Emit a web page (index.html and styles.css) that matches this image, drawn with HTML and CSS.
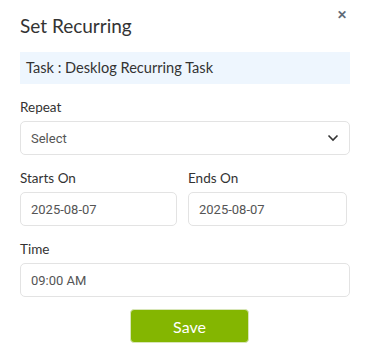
FILE: index.html
```html
<html lang="en">

<head>
    <meta charset="UTF-8">
    <meta name="viewport" content="width=device-width, initial-scale=1.0">
    <title>Set Recurring</title>
    <link rel="stylesheet" href="styles.css">
</head>

<body>
    <div class="modal">
        <div class="modal-header">
            <h2 class="modal-title">Set Recurring</h2>
            <button class="close-btn">&#10005;</button>
        </div>
        <div class="task-name">Task : Desklog Recurring Task</div>

        <div class="field">
            <label>Repeat</label>
            <div class="select-box">
                <span>Select</span>
                <svg width="12" height="8" viewBox="0 0 12 8">
                    <path d="M1.5 1.5 L6 6 L10.5 1.5" fill="none" stroke="#333" stroke-width="1.6" />
                </svg>
            </div>
        </div>

        <div class="date-row">
            <div class="field">
                <label>Starts On</label>
                <div class="input-box">2025-08-07</div>
            </div>
            <div class="field">
                <label>Ends On</label>
                <div class="input-box">2025-08-07</div>
            </div>
        </div>

        <div class="field">
            <label>Time</label>
            <div class="input-box">09:00 AM</div>
        </div>

        <div class="modal-footer">
            <button class="save-btn">Save</button>
        </div>
    </div>
</body>

</html>
```

FILE: styles.css
```css
body {
    margin: 0;
    background: #fff;
    font-family: Lato, "Liberation Sans", sans-serif;
    color: #333;
}

.modal {
    width: 330px;
    padding: 14px 20px;
    display: flex;
    flex-direction: column;
}

.modal-header {
    display: flex;
    justify-content: space-between;
    align-items: flex-start;
    padding-right: 3px;
}

.modal-title {
    margin: 0;
    font-size: 19px;
    font-weight: 400;
    line-height: 24px;
    color: #333;
}

.close-btn {
    margin-top: -6px;
    padding: 0;
    border: none;
    background: none;
    font-size: 12px;
    font-weight: 700;
    color: #5f6b77;
    line-height: 14px;
}

.task-name {
    margin-top: 14px;
    height: 32px;
    line-height: 32px;
    padding-left: 6px;
    background: #eef6fe;
    font-size: 14.6px;
    color: #333;
}

.field {
    display: flex;
    flex-direction: column;
    margin-top: 13px;
}

.field label {
    font-size: 13.5px;
    line-height: 20px;
    margin-bottom: 4px;
    color: #333;
}

.select-box,
.input-box {
    height: 34px;
    box-sizing: border-box;
    border: 1px solid #e3e3e3;
    border-radius: 5px;
    padding: 0 10px;
    display: flex;
    align-items: center;
    font-family: Roboto, sans-serif;
    font-size: 13px;
    color: #555;
}

.select-box {
    justify-content: space-between;
}

.date-row {
    display: grid;
    grid-template-columns: 157px 159px;
    column-gap: 11px;
}

.modal-footer {
    display: flex;
    justify-content: center;
    margin-top: 12px;
    padding-left: 9px;
}

.save-btn {
    width: 119px;
    height: 34px;
    border: 1px solid #d8e6b8;
    border-radius: 4px;
    background: #84b601;
    color: #fff;
    font-family: Lato, sans-serif;
    font-size: 16px;
}
```
